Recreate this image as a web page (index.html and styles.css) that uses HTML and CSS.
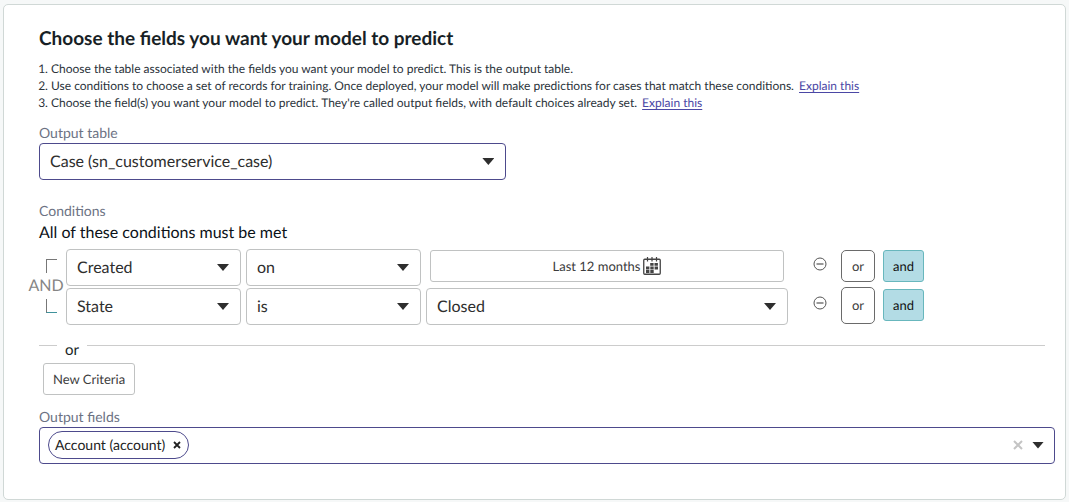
FILE: index.html
```html
<!DOCTYPE html>
<html lang="en">
<head>
  <meta charset="UTF-8" />
  <meta name="viewport" content="width=device-width, initial-scale=1" />
  <title>Output fields</title>
  <link rel="stylesheet" href="styles.css">
</head>
<body>

  <main class="card">
    <h1>Choose the fields you want your model to predict</h1>

    <ol class="steps">
      <li>Choose the table associated with the fields you want your model to predict. This is the output table.</li>
      <li>Use conditions to choose a set of records for training. Once deployed, your model will make predictions for cases that match these conditions. <a href="#">Explain this</a></li>
      <li>Choose the field(s) you want your model to predict. They're called output fields, with default choices already set. <a href="#">Explain this</a></li>
    </ol>

    <label class="field-label" for="outputTable">Output table</label>
    <div class="select output-table">
      <select id="outputTable">
        <option>Case (sn_customerservice_case)</option>
      </select>
    </div>

    <section class="conditions">
      <div class="field-label">Conditions</div>
      <h2>All of these conditions must be met</h2>

      <div class="condition-group">
        <div class="joiner">
          <span class="corner corner-top"></span>
          <span>AND</span>
          <span class="corner corner-bottom"></span>
        </div>

        <div class="condition-rows">
          <div class="condition">
            <div class="select">
              <select aria-label="Field">
                <option>Created</option>
              </select>
            </div>
            <div class="select">
              <select aria-label="Operator">
                <option>on</option>
              </select>
            </div>
            <button type="button" class="btn date-btn">
              Last 12 months
              <svg width="18" height="18" viewBox="0 0 18 18" fill="none" stroke="#444">
                <rect x="0.75" y="2.25" width="16.5" height="15" rx="1" stroke-width="1.3" />
                <path d="M4.5 0v4.5M9 0v4.5M13.5 0v4.5" stroke-width="1.2" />
                <path d="M7.2 7.3h7.8M3 11h12M3 14.5h7.8" stroke-width="2.8" stroke-dasharray="3.4 0.9" />
              </svg>
            </button>
            <div class="actions">
              <button type="button" class="remove-btn" aria-label="Remove condition">
                <svg width="14" height="14" viewBox="0 0 14 14" fill="none" stroke="#555">
                  <circle cx="7" cy="7" r="6" />
                  <path d="M3.5 7h7" stroke-width="1.2" />
                </svg>
              </button>
              <button type="button" class="btn or-btn">or</button>
              <button type="button" class="btn and-btn">and</button>
            </div>
          </div>

          <div class="condition">
            <div class="select">
              <select aria-label="Field">
                <option>State</option>
              </select>
            </div>
            <div class="select">
              <select aria-label="Operator">
                <option>is</option>
              </select>
            </div>
            <div class="select">
              <select aria-label="Value">
                <option>Closed</option>
              </select>
            </div>
            <div class="actions">
              <button type="button" class="remove-btn" aria-label="Remove condition">
                <svg width="14" height="14" viewBox="0 0 14 14" fill="none" stroke="#555">
                  <circle cx="7" cy="7" r="6" />
                  <path d="M3.5 7h7" stroke-width="1.2" />
                </svg>
              </button>
              <button type="button" class="btn or-btn or-btn-tall">or</button>
              <button type="button" class="btn and-btn">and</button>
            </div>
          </div>
        </div>
      </div>

      <div class="divider">or</div>
      <button type="button" class="btn new-criteria">New Criteria</button>
    </section>

    <label class="field-label" for="outputFields">Output fields</label>
    <div class="multi-select">
      <span class="tag">
        Account (account)
        <button type="button" aria-label="Remove Account">
          <svg width="8" height="8" viewBox="0 0 8 8" stroke="#222" stroke-width="1.8">
            <path d="M1 1l6 6M7 1l-6 6" />
          </svg>
        </button>
      </span>
      <input type="text" id="outputFields" />
      <button type="button" aria-label="Clear all">
        <svg width="10" height="10" viewBox="0 0 10 10" stroke="#c4c4c4" stroke-width="2">
          <path d="M1 1l8 8M9 1l-8 8" />
        </svg>
      </button>
      <button type="button" class="arrow" aria-label="Show fields"></button>
    </div>
  </main>

</body>
</html>
```

FILE: styles.css
```css
* {
  box-sizing: border-box;
}

body {
  margin: 0;
  padding: 4px 3px 2px;
  background: #f6f8f8;
  color: #181f26;
  font-family: Lato, "Liberation Sans", sans-serif;
  text-rendering: geometricPrecision;
}

button, input, select {
  font-family: inherit;
  text-rendering: inherit;
  margin: 0;
}

.card {
  padding: 22px 10px 35px 35px;
  background: #fff;
  border: 1px solid #d0d8d6;
  border-radius: 5px;
}

h1 {
  margin: 0 0 9px;
  font-size: 19px;
  line-height: 24px;
  font-weight: 700;
}

h2 {
  margin: 3px 0 6px;
  font-size: 16px;
  line-height: 20px;
  font-weight: 400;
  color: #0c1218;
}

.steps {
  margin: 0 0 13px;
  padding-left: 12px;
  font-size: 12px;
  line-height: 17px;
  color: #2b333b;
}

.steps a {
  margin-left: 2px;
  color: #4b48a5;
  text-underline-offset: 2px;
}

.field-label {
  display: block;
  margin-bottom: 1px;
  font-size: 14px;
  line-height: 18px;
  color: #6c7283;
}

/* Drop-downs */
.select {
  position: relative;
}

.select select {
  display: block;
  width: 100%;
  height: 37px;
  padding: 0 32px 0 10px;
  appearance: none;
  background: #fff;
  border: 1px solid #c0c2c2;
  border-radius: 4px;
  font-size: 16px;
  color: #2e2e2e;
}

.select::after,
.arrow::after {
  content: "";
  width: 12px;
  height: 7px;
  background: #2e2e2e;
  clip-path: polygon(0 0, 100% 0, 50% 100%);
}

.select::after {
  position: absolute;
  top: 15px;
  right: 12px;
  pointer-events: none;
}

.output-table {
  width: 46%;
  min-width: 260px;
}

.output-table select {
  border-color: #4d4a8c;
}

/* Conditions */
.conditions {
  margin: 22px 0 13px;
}

.conditions .field-label {
  margin: 0;
}

.condition-group {
  display: flex;
  gap: 2px;
  margin-left: -11px;
}

.joiner {
  display: flex;
  flex-direction: column;
  align-items: center;
  justify-content: center;
  gap: 3px;
  width: 36px;
  padding-bottom: 3px;
  font-size: 16px;
  line-height: 20px;
  color: #858585;
}

.corner {
  width: 11px;
  height: 14px;
  margin-left: 10px;
  border-left: 1px solid #777;
}

.corner-top {
  border-top: 1px solid #777;
}

.corner-bottom {
  border-bottom: 1px solid #3f929c;
}

.condition-rows {
  flex: 1;
  display: grid;
  gap: 2px;
}

.condition {
  display: grid;
  grid-template-columns: 175fr 175fr 362fr 262px;
  column-gap: 5px;
  align-items: start;
}

.btn {
  height: 32px;
  padding: 0 9px;
  background: #fff;
  border: 1px solid #c0c2c2;
  border-radius: 3px;
  font-size: 13px;
  color: #3c3c3c;
  cursor: pointer;
}

.date-btn {
  display: flex;
  align-items: center;
  justify-content: center;
  gap: 3px;
  margin: 1px 4px 0;
}

.actions {
  display: flex;
  align-items: center;
  gap: 8px;
  height: 34px;
  padding-left: 20px;
}

.remove-btn {
  display: flex;
  margin: 0 6px 4px 0;
  padding: 0;
  border: none;
  background: none;
  cursor: pointer;
}

.or-btn {
  width: 34px;
  border-color: #6a6a6a;
  border-radius: 5px;
}

.or-btn-tall {
  height: 37px;
}

.and-btn {
  width: 41px;
  background: #b3dce5;
  border-color: #68b7bd;
  color: #111;
}

.divider {
  display: flex;
  gap: 8px;
  margin: 17px 10px 5px 0;
  font-size: 15px;
  line-height: 16px;
}

.divider::before,
.divider::after {
  content: "";
  width: 18px;
  margin-top: 3px;
  border-top: 1px solid #ccc;
}

.divider::after {
  flex: 1;
}

.new-criteria {
  display: block;
  margin-left: 4px;
}

/* Output fields */
.multi-select {
  display: flex;
  align-items: center;
  height: 37px;
  padding: 0 10px 1px 8px;
  border: 1px solid #4d4a8c;
  border-radius: 4px;
}

.multi-select button {
  display: flex;
  padding: 0;
  border: none;
  background: none;
  cursor: pointer;
}

.multi-select input {
  flex: 1;
  min-width: 0;
  border: none;
  outline: none;
  font-size: 14px;
}

.multi-select .arrow {
  margin-left: 9px;
}

.tag {
  display: flex;
  align-items: center;
  gap: 8px;
  height: 28px;
  padding: 0 7px 0 6px;
  border: 1px solid #4d4a8c;
  border-radius: 14px;
  font-size: 14px;
  line-height: 18px;
  color: #222;
}
```
